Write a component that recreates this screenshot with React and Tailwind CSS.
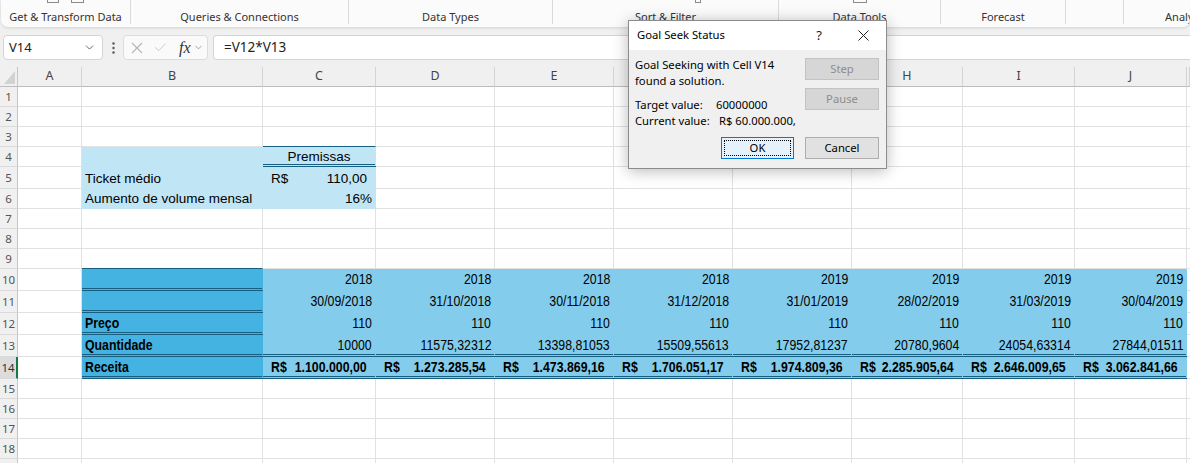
import { Check, ChevronDown } from 'lucide-react';

const UI = "font-[family-name:'Noto_Sans','Liberation_Sans',sans-serif]";
const APTOS = "font-[family-name:'Liberation_Sans',Arial,sans-serif] text-[13.5px]";
// sem Arial Narrow instalada: Liberation Sans comprimida em 82%
const NARROW = "font-[family-name:'Liberation_Sans',Arial,sans-serif] text-[15px]";

const GRID = 'grid grid-cols-[18px_64px_181px_113px_119px_119px_119px_119px_111px_112px_112px_1fr]';

const ANOS = ['2018', '2018', '2018', '2018', '2019', '2019', '2019', '2019'];
const DATAS = ['30/09/2018', '31/10/2018', '30/11/2018', '31/12/2018', '31/01/2019', '28/02/2019', '31/03/2019', '30/04/2019'];
const QTDS = ['10000', '11575,32312', '13398,81053', '15509,55613', '17952,81237', '20780,9604', '24054,63314', '27844,01511'];
const RECEITAS = ['1.100.000,00', '1.273.285,54', '1.473.869,16', '1.706.051,17', '1.974.809,36', '2.285.905,64', '2.646.009,65', '3.062.841,66'];

const GRUPOS = [
  { w: 'w-[130px]', nome: 'Get & Transform Data', icones: true },
  { w: 'w-[218px]', nome: 'Queries & Connections' },
  { w: 'w-[204px]', nome: 'Data Types' },
  { w: 'w-[226px]', nome: 'Sort & Filter' },
  { w: 'w-[162px]', nome: 'Data Tools' },
  { w: 'w-[125px]', nome: 'Forecast' },
  { w: 'w-[58px]', nome: '' },
  { w: 'w-[124px]', nome: 'Analysis', ultimo: true },
];

// celula generica da planilha
function Celula({ fill, bottom = 'grid', align = 'left', narrow = false, bold = false, children }) {
  const fundo = fill === 'p' ? 'bg-[#c0e6f5]' : fill === 'd' ? 'bg-[#44b3e1]' : fill === 'l' ? 'bg-[#83cceb]' : 'bg-white';
  const dir = fill ? 'border-r border-r-transparent' : 'border-r border-r-[#e1e1e1]';
  let baixo = fill ? 'border-b border-b-transparent' : 'border-b border-b-[#e1e1e1]';
  if (bottom === 'dark') baixo = 'border-b border-b-[#156082]';
  if (bottom === 'dbl') baixo = 'border-b-[3px] border-double border-b-[#156082]';
  const alin =
    align === 'right' ? 'justify-end pr-[3px]'
      : align === 'center' ? 'justify-center'
        : align === 'acc' ? 'justify-between px-[8px]'
          : 'justify-start pl-[3px]';
  const vert = narrow
    ? (bottom === 'dbl' ? 'items-center pt-[2px]' : 'items-center')
    : 'items-end pb-[1px] leading-[16px]';
  const fonte = narrow ? NARROW : APTOS;
  const desce = !narrow && bottom === 'dbl' ? '-mb-[2px]' : '';
  const escL = narrow ? 'inline-block origin-left scale-x-[0.82]' : '';
  const escR = narrow ? 'inline-block origin-right scale-x-[0.82]' : '';

  let conteudo = null;
  if (align === 'acc') {
    conteudo = (
      <>
        <span className={`min-w-0 ${escL} ${desce}`}>{children[0]}</span>
        <span className={`shrink-0 ${escR} ${desce}`}>{children[1]}</span>
      </>
    );
  } else if (children) {
    conteudo = <span className={`shrink-0 ${align === 'right' ? escR : escL} ${desce}`}>{children}</span>;
  }

  return (
    <div className={`flex min-w-0 overflow-hidden whitespace-nowrap text-black ${vert} ${fonte} ${bold ? 'font-bold' : ''} ${fundo} ${dir} ${baixo} ${alin}`}>
      {conteudo}
    </div>
  );
}

function specsDaLinha(n) {
  const s = Array.from({ length: 11 }, () => ({}));
  if (n === 3) s[2] = { bottom: 'dark' };
  if (n === 4) {
    s[1] = { fill: 'p' };
    s[2] = { fill: 'p', bottom: 'dbl', align: 'center', children: 'Premissas' };
  }
  if (n === 5) {
    s[1] = { fill: 'p', children: 'Ticket médio' };
    s[2] = { fill: 'p', align: 'acc', children: ['R$', '110,00'] };
  }
  if (n === 6) {
    s[1] = { fill: 'p', children: 'Aumento de volume mensal' };
    s[2] = { fill: 'p', align: 'right', children: '16%' };
  }
  if (n === 9) s[1] = { bottom: 'dark' };
  if (n >= 10 && n <= 14) {
    const rotulo = { 12: 'Preço', 13: 'Quantidade', 14: 'Receita' }[n] || '';
    s[1] = { fill: 'd', bottom: 'dbl', narrow: true, bold: true, children: rotulo };
    for (let i = 0; i < 8; i++) {
      const base = { fill: 'l', narrow: true, align: 'right', bottom: n >= 13 ? 'dbl' : 'grid' };
      if (n === 10) s[i + 2] = { ...base, children: ANOS[i] };
      if (n === 11) s[i + 2] = { ...base, children: DATAS[i] };
      if (n === 12) s[i + 2] = { ...base, children: '110' };
      if (n === 13) s[i + 2] = { ...base, children: QTDS[i] };
      if (n === 14) s[i + 2] = { ...base, align: 'acc', bold: true, children: ['R$', RECEITAS[i]] };
    }
  }
  return s;
}

function Linha({ n }) {
  const alto = [5, 10, 11, 12, 13, 14].includes(n) ? 'h-[22px]' : 'h-[20px]';
  const sel = n === 14;
  return (
    <div className={`${GRID} ${alto}`}>
      <div className={`flex items-center justify-center text-[11.5px] border-b border-b-[#dadada] ${sel ? 'bg-[#dcdcdc] border-r-2 border-r-[#107c41] text-[#333]' : 'bg-[#f0f0f0] border-r border-r-[#c6c6c6] text-[#555]'}`}>
        {n}
      </div>
      {specsDaLinha(n).map((sp, i) => <Celula key={i} {...sp} />)}
    </div>
  );
}

function Ribbon() {
  return (
    <div className="flex h-[27px] ml-[1px] bg-[#fbfbfb] rounded-b-[7px] shadow-[0_1px_3px_rgba(0,0,0,0.12)] overflow-hidden">
      {GRUPOS.map((g, i) => (
        <div key={i} className={`${g.w} shrink-0 h-[24px] flex flex-col justify-between items-center ${g.ultimo ? '' : 'border-r border-r-[#dadada]'}`}>
          <div className="flex gap-[12px] h-[3px]">
            {g.icones && (
              <>
                <div className="w-[12px] h-[3px] border-x border-b border-[#8a8a8a]" />
                <div className="w-[13px] h-[3px] border-x border-b border-[#8a8a8a]" />
              </>
            )}
            {i === 3 && <div className="ml-[64px] w-[6px] h-[3px] border-x border-b border-[#8a8a8a]" />}
            {i === 4 && <div className="w-[14px] h-[3px] border-x border-b border-[#8a8a8a]" />}
          </div>
          <span className="text-[11px] leading-[14px] text-[#333] whitespace-nowrap">{g.nome}</span>
        </div>
      ))}
    </div>
  );
}

function BarraFormula() {
  return (
    <div className="flex items-center h-[25px] mt-[8px] pl-[3px]">
      <div className="flex items-center justify-between w-[100px] h-[25px] bg-white border border-[#d4d4d4] rounded-[4px] pl-[5px] pr-[6px] text-[13px] text-[#222]">
        V14
        <ChevronDown size={13} strokeWidth={1.6} className="text-[#555]" />
      </div>
      <div className="w-[20px] flex justify-center">
        <svg width="3" height="12" viewBox="0 0 3 12">
          <circle cx="1.5" cy="1.5" r="1.2" fill="#555" />
          <circle cx="1.5" cy="6" r="1.2" fill="#555" />
          <circle cx="1.5" cy="10.5" r="1.2" fill="#555" />
        </svg>
      </div>
      <div className="flex items-center w-[85px] h-[25px] bg-[#fafafa] border border-[#dcdcdc] rounded-[4px] pl-[7px]">
        <svg width="12" height="12" viewBox="0 0 12 12" className="mr-[10px]">
          <path d="M1 1 L11 11 M11 1 L1 11" stroke="#b5b5b5" strokeWidth="1.1" fill="none" />
        </svg>
        <Check size={15} strokeWidth={1.1} className="text-[#b5b5b5] mr-[11px]" />
        <span className="font-[family-name:'Liberation_Serif',serif] italic text-[16px] text-[#333] leading-none">fx</span>
        <ChevronDown size={11} strokeWidth={1.4} className="text-[#777] ml-[2px]" />
      </div>
      <div className="flex-1 ml-[5px] h-[25px] bg-white border border-[#d4d4d4] border-r-0 rounded-l-[4px] pl-[10px] text-[13.5px] text-[#222] flex items-center">
        =V12*V13
      </div>
    </div>
  );
}

function Cabecalho() {
  const letras = ['A', 'B', 'C', 'D', 'E', 'F', 'G', 'H', 'I', 'J', ''];
  return (
    <div className={`${GRID} h-[20px] mt-[7px]`}>
      <div className="flex items-end justify-end pr-[2px] pb-[2px] border-r border-r-[#c6c6c6] border-b border-b-[#bcbcbc]">
        <svg width="11" height="13" viewBox="0 0 11 13">
          <polygon points="11,0 11,13 0,13" fill="#d2d2d2" />
        </svg>
      </div>
      {letras.map((l, i) => (
        <div key={i} className="flex items-center justify-center border-r border-r-[#d4d4d4] border-b border-b-[#bcbcbc] text-[12.5px] text-[#444]">
          {l}
        </div>
      ))}
    </div>
  );
}

function Botao({ children, desabilitado }) {
  return (
    <div className={`flex items-center justify-center w-[74px] h-[22px] border ${desabilitado ? 'bg-[#d6d6d6] border-[#c3c3c3] text-[#8d8d8d]' : 'bg-[#e1e1e1] border-[#adadad] text-black'}`}>
      {children}
    </div>
  );
}

function GoalSeek() {
  return (
    <div className="absolute left-[628px] top-[20px] w-[259px] h-[149px] border border-[#8c8c8c] bg-[#f0f0f0] shadow-[0_2px_14px_rgba(0,0,0,0.28)] flex flex-col text-[11.25px] text-black">
      <div className="h-[29px] bg-white flex items-center pl-[8px]">
        <span className="w-[172px]">Goal Seek Status</span>
        <span className="w-[20px] text-center text-[13px] text-[#222]">?</span>
        <span className="ml-[24px] w-[20px] flex justify-center">
          <svg width="11" height="11" viewBox="0 0 11 11">
            <path d="M0.5 0.5 L10.5 10.5 M10.5 0.5 L0.5 10.5" stroke="#222" strokeWidth="1" fill="none" />
          </svg>
        </span>
      </div>
      <div className="flex-1 flex flex-col pt-[7px] pl-[6px] pr-[7px]">
        <div className="flex h-[80px]">
          <div className="flex-1 leading-[16px]">
            <div>Goal Seeking with Cell V14</div>
            <div>found a solution.</div>
            <div className="mt-[8px] flex">
              <span className="w-[81px]">Target value:</span>
              <span>60000000</span>
            </div>
            <div className="flex">
              <span className="w-[84px]">Current value:</span>
              <span>R$ 60.000.000,</span>
            </div>
          </div>
          <div className="flex flex-col gap-[8px] pt-[1px]">
            <Botao desabilitado>Step</Botao>
            <Botao desabilitado>Pause</Botao>
          </div>
        </div>
        <div className="flex justify-end gap-[11px]">
          <div className="w-[73px] h-[22px] p-[2px] bg-[#e5f1fb] border border-[#0078d7]">
            <div className="w-full h-full flex items-center justify-center border border-dotted border-black">OK</div>
          </div>
          <Botao>Cancel</Botao>
        </div>
      </div>
    </div>
  );
}

export default function App() {
  const linhas = Array.from({ length: 19 }, (_, i) => i + 1);
  return (
    <div className={`relative w-[1190px] h-[463px] overflow-hidden bg-[#f0f0f0] ${UI}`}>
      <Ribbon />
      <BarraFormula />
      <Cabecalho />
      {linhas.map(n => <Linha key={n} n={n} />)}
      <GoalSeek />
    </div>
  );
}
